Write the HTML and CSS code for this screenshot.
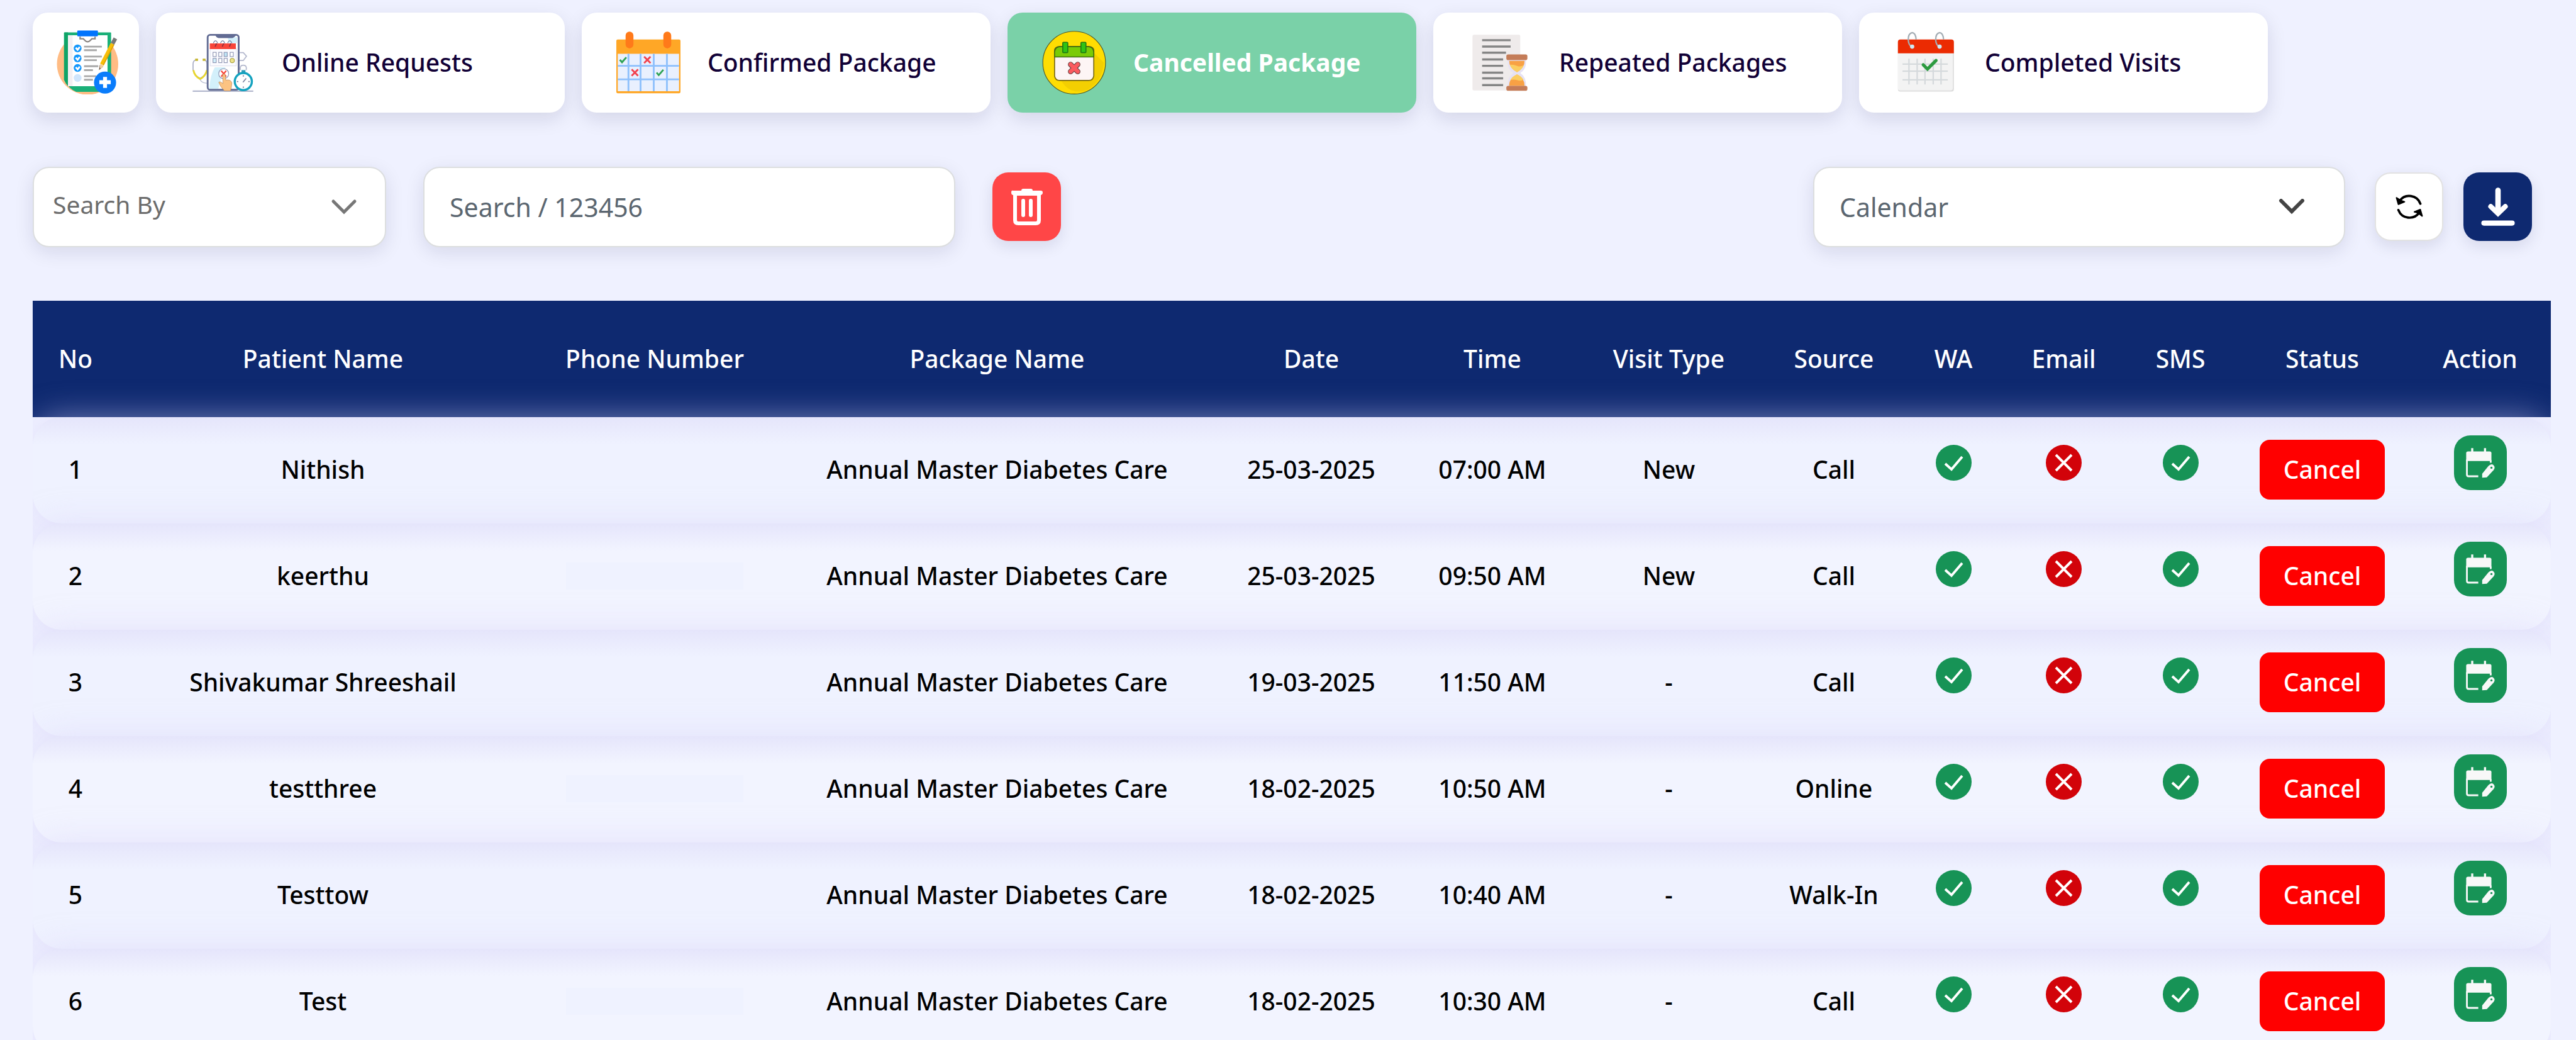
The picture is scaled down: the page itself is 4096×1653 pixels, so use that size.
FILE: index.html
```html
<!DOCTYPE html>
<html lang="en">
<head>
<meta charset="utf-8">
<title>Cancelled Package</title>
<link rel="stylesheet" href="styles.css">
</head>
<body>
<svg class="sprite" aria-hidden="true">
  <symbol id="ok" viewBox="0 0 57 57"><circle cx="28.500" cy="28.500" r="28.500" fill="#179356"/><path d="M15 30l10 9 17-20" fill="none" stroke="#fff" stroke-width="4"/></symbol>
  <symbol id="no" viewBox="0 0 57 57"><circle cx="28.500" cy="28.500" r="28.500" fill="#d2030a"/><path d="M16 16l25 25M41 16L16 41" fill="none" stroke="#fff" stroke-width="4"/></symbol>
  <symbol id="edit" viewBox="0 0 148 154">
    <path d="M34 50q0-5 5-5h61q5 0 5 5v22H34z" fill="#f8f8f8"/>
    <path d="M51 36v12M87 36v12" stroke="#f8f8f8" stroke-width="6"/>
    <path d="M36 68v42q0 5 5 5h27M103 70v7" fill="none" stroke="#f8f8f8" stroke-width="5"/>
    <path d="M79 108l18-22q8-8 14-2t0 14l-19 20-13 1z" fill="#f8f8f8"/>
    <circle cx="105" cy="91" r="3" fill="#179356"/>
  </symbol>
</svg>
<main class="page">
  <nav class="tabs" aria-label="Packages">
    <button class="tab tab-icon" type="button" aria-label="New package">
      <svg class="tab-pic" viewBox="0 0 180 180">
        <circle cx="94" cy="95" r="86" fill="#ffbc84"/>
        <path d="M28 8q0-2 2-2h128q2 0 2 2v165H62q-20-8-34-34z" fill="#1bb078"/>
        <path d="M28 8q0-2 2-2h9v151l-6-8-5-10z" fill="#0fa467"/>
        <path d="M39 14h111v143H39z" fill="#fff"/><path d="M39 14h13v143H39z" fill="#f3eff2"/>
        <path d="M73 18v6h9l5 5q7 7 14 0l5-5h9v-6" fill="none" stroke="#8a8582" stroke-width="4"/>
        <rect x="65" y="1" width="58" height="16" rx="2" fill="#0274fc"/>
        <g fill="#1597fb"><circle cx="66" cy="51" r="11"/><circle cx="66" cy="79" r="11"/><circle cx="66" cy="106" r="11"/></g>
        <circle cx="66" cy="134" r="11" fill="#cfe5fc"/>
        <path d="M61 49l5 6 6-8M61 77l5 6 6-8M61 104l5 6 6-8" fill="none" stroke="#fff" stroke-width="5"/>
        <path d="M84 46h50M84 56h36M84 74h50M84 84h36M84 101h40M84 112h25M84 129h34M84 139h25" stroke="#a9a9a9" stroke-width="5"/>
        <path d="M126 112l2-14 10 4z" fill="#6b5442"/><path d="M128 104l2-11 9 7-8 8z" fill="#f5cf9e"/>
        <path d="M134 96L164 38" stroke="#f8be08" stroke-width="11"/><path d="M138 98L168 40" stroke="#dda005" stroke-width="3"/>
        <path d="M164 38l8-15" stroke="#777" stroke-width="11"/>
        <circle cx="143" cy="147" r="31" fill="#0a7cfb"/><path d="M143 131v31M127 146h32" stroke="#fff" stroke-width="11"/>
      </svg>
    </button>
    <button class="tab" type="button">
      <svg class="tab-pic" viewBox="0 0 180 180">
        <path d="M6 171h170" stroke="#b3b8cd" stroke-width="4"/>
        <path d="M16 83q-9 2-9 12v16q2 16 20 24 16-8 19-24V95q0-10-8-12" fill="none" stroke="#a9aec6" stroke-width="3"/>
        <path d="M8 112q3 17 19 25 15-8 19-25" fill="none" stroke="#e8d62d" stroke-width="5"/>
        <path d="M13 83h8M34 83h8" stroke="#c5b52d" stroke-width="6"/><path d="M27 138q2 10 20 11" fill="none" stroke="#b3b8cd" stroke-width="2"/>
        <path d="M138 63h10l9 10-9 12h-18" fill="none" stroke="#b3b8cd" stroke-width="3"/>
        <rect x="48" y="13" width="87" height="154" rx="7" fill="#fff" stroke="#616b93" stroke-width="5"/>
        <path d="M52 164q4-40 16-60h30q-14 30-20 60zM104 20h27v16h-23z" fill="#d3f0fb"/>
        <path d="M69 13h60q-7 9-12 9H79q-7 0-10-9z" fill="#616b93"/>
        <rect x="55" y="50" width="73" height="50" fill="#fbfbff" stroke="#dfe2ee" stroke-width="2"/>
        <path d="M54 37h73v16H54z" fill="#f8453a"/>
        <path d="M64 36q6-13 12 0M84 36q6-13 12 0M104 36q6-13 12 0" fill="none" stroke="#6a7196" stroke-width="2"/>
        <path d="M73 37l-4 9M93 37l-4 9M113 37l-4 9" stroke="#8a2f3c" stroke-width="3"/>
        <g fill="#fff" stroke="#8e95b3" stroke-width="2"><rect x="63" y="62" width="9" height="12"/><rect x="79" y="62" width="9" height="12"/><rect x="94" y="62" width="9" height="12" fill="#bfe4f5"/><rect x="111" y="62" width="9" height="12"/><rect x="63" y="79" width="9" height="12" fill="#d3f0fb"/><rect x="79" y="79" width="9" height="12"/><rect x="94" y="79" width="9" height="12"/></g>
        <circle cx="117" cy="85" r="6" fill="#ece28a" stroke="#a8a03c" stroke-width="2"/>
        <circle cx="93" cy="122" r="14" fill="#fff" stroke="#8e95b3" stroke-width="2"/>
        <path d="M86 114l14 16M100 114l-14 16" stroke="#f8453a" stroke-width="4"/>
        <path d="M90 125q4-5 7 0l2 15q14-3 17 8-1 14-4 22H95q-12-12-16-24 4-4 12 4z" fill="#fcc382" stroke="#a9764b" stroke-width="1"/>
        <path d="M140 112q-3-14 8-14t8 14" fill="none" stroke="#b3b8cd" stroke-width="3"/><path d="M143 112h11v9h-11z" fill="#2f9bb8"/>
        <circle cx="148" cy="144" r="24" fill="#fff" stroke="#14a2bf" stroke-width="6"/>
        <path d="M147 146l9-11M148 126v4M148 158v4M130 144h4M162 144h4" stroke="#7c83a0" stroke-width="3"/>
      </svg>
      <span>Online Requests</span>
    </button>
    <button class="tab" type="button">
      <svg class="tab-pic" viewBox="0 0 180 180">
        <rect x="0" y="26" width="180" height="151" rx="4" fill="#ffa726"/><path d="M4 66h172v105H4z" fill="#e9f0fe"/>
        <path d="M34 66v105M68 66v105M105 66v105M142 66v105M4 100h172M4 138h172" stroke="#8ec0fc" stroke-width="5"/>
        <path d="M37 15v25M143 15v25" stroke="#ff7a1a" stroke-width="22" stroke-linecap="round"/>
        <path d="M10 83l6 7 12-14M113 119l6 7 13-15" fill="none" stroke="#2fa355" stroke-width="5"/>
        <path d="M78 74l18 18M96 74L78 92M43 110l18 18M61 110l-18 18" stroke="#f2414d" stroke-width="5"/>
      </svg>
      <span>Confirmed Package</span>
    </button>
    <button class="tab tab-active" type="button" aria-current="page">
      <svg class="tab-pic" viewBox="0 0 180 180">
        <circle cx="90" cy="91" r="88" fill="#ffdd02" stroke="#4f5a2c" stroke-width="2"/>
        <path d="M146 64l27 27q-3 52-46 76-46 18-74-26z" fill="#f3cf02"/>
        <path d="M35 58q0-12 14-12h82q14 0 14 12v70q-2 13-14 13H49q-12 0-14-13z" fill="#fdf5f5" stroke="#7a6b10" stroke-width="3"/>
        <path d="M35 75V60q2-13 14-14h82q12 1 14 14v15z" fill="#7acb06" stroke="#3f6d10" stroke-width="3"/>
        <rect x="58" y="34" width="14" height="29" rx="2" fill="#2fc313" stroke="#1f7a12" stroke-width="3"/><rect x="109" y="34" width="14" height="29" rx="2" fill="#2fc313" stroke="#1f7a12" stroke-width="3"/>
        <path d="M80 96l20 20M100 96l-20 20" stroke="#6b4545" stroke-width="15" stroke-linecap="round"/>
        <path d="M80 96l20 20M100 96l-20 20" stroke="#fb5a5f" stroke-width="11" stroke-linecap="round"/>
      </svg>
      <span>Cancelled Package</span>
    </button>
    <button class="tab" type="button">
      <svg class="tab-pic" viewBox="0 0 180 180">
        <rect x="13" y="13" width="134" height="156" rx="4" fill="#efebeb"/>
        <path d="M40 28h80M40 46h80M40 63h67M40 82h59M40 100h59M40 119h59M40 135h59M40 154h59" stroke="#858585" stroke-width="6"/>
        <path d="M112 84h51q2 26-16 36 18 12 16 38h-51q-2-26 16-38-18-10-16-36z" fill="#e6e2f4"/>
        <path d="M116 86h43q1 18-21 32-23-14-22-32zM116 156q-1-20 22-32 22 12 21 32z" fill="#f8a144"/>
        <path d="M118 97q10-1 20 3 10 4 19-2-4 12-19 20-17-9-20-21zM119 140q6-11 19-16 12 5 18 15-9 5-18 1-10-3-19 0z" fill="#fbcd61"/>
        <rect x="108" y="68" width="59" height="16" rx="5" fill="#c47c58"/><rect x="108" y="156" width="59" height="14" rx="5" fill="#c47c58"/>
      </svg>
      <span>Repeated Packages</span>
    </button>
    <button class="tab" type="button">
      <svg class="tab-pic" viewBox="0 0 180 180">
        <rect x="12" y="28" width="157" height="144" rx="6" fill="#dcdcdc"/><path d="M12 60h154v103q0 6-6 6H18q-6 0-6-6z" fill="#f3f3f3"/>
        <path d="M12 65V33q0-7 7-7h143q7 0 7 7v32z" fill="#eb2b02"/>
        <path d="M43 80v72M66 80v72M88 80v72M111 80v72M133 80v72M25 95h127M25 115h127M25 139h127" stroke="#d5d9dc" stroke-width="4"/>
        <path d="M63 26q-1-18-11-19-11 2-11 20 1 15 10 19M140 26q-1-18-11-19-11 2-11 20 1 15 10 19" fill="none" stroke="#a4adb4" stroke-width="4"/>
        <circle cx="52" cy="46" r="6" fill="#cfe9f4"/><circle cx="129" cy="46" r="6" fill="#cfe9f4"/>
        <path d="M83 97l12 12 24-24" fill="none" stroke="#2c9a3f" stroke-width="9" stroke-linecap="round"/>
      </svg>
      <span>Completed Visits</span>
    </button>
  </nav>

  <section class="toolbar" aria-label="Filters">
    <div class="pick pick-search">
      <select class="field field-small" aria-label="Search by"><option>Search By</option></select>
      <svg class="chev" viewBox="0 0 42 26" width="42" height="26"><path d="M4 4l17 17L38 4" fill="none" stroke="#777" stroke-width="5" stroke-linecap="round"/></svg>
    </div>
    <input class="field field-wide" type="text" placeholder="Search / 123456" aria-label="Search">
    <button class="square square-red" type="button" aria-label="Delete">
      <svg viewBox="0 0 50 58" width="50" height="58"><path d="M16 3q0-3 3-3h12q3 0 3 3h13q3 0 3 3t-3 4H3Q0 10 0 6t3-3z" fill="#fff"/><path d="M6 8h38v42q0 5-5 5H11q-5 0-5-5z" fill="none" stroke="#fff" stroke-width="6"/><path d="M19 19v23M31 19v23" stroke="#fff" stroke-width="6" stroke-linecap="round"/></svg>
    </button>
    <div class="right">
      <div class="pick pick-calendar">
        <select class="field field-wide" aria-label="Calendar"><option>Calendar</option></select>
        <svg class="chev" viewBox="0 0 42 26" width="42" height="26"><path d="M4 3l17 17L38 3" fill="none" stroke="#444" stroke-width="6" stroke-linecap="round"/></svg>
      </div>
      <button class="square square-white" type="button" aria-label="Refresh">
        <svg viewBox="222 230 238 224" width="44" height="42"><g fill="none" stroke="#000" stroke-width="20" stroke-linecap="round"><path d="M436 314A102 102 0 0 0 258 288M247 368A102 102 0 0 0 426 390"/></g><g stroke="#000" stroke-width="12" stroke-linejoin="round"><path d="M231 263l16 56 52-22-30-10zM451 420l-16-56-50 20 30 8z"/></g></svg>
      </button>
      <button class="square square-navy" type="button" aria-label="Download">
        <svg viewBox="948 180 288 326" width="54" height="61"><g stroke="#fff" stroke-width="46" stroke-linecap="round"><path d="M1092 204v170"/><path d="M972 482h240" stroke-width="44"/></g><path d="M1030 341l62 60 62-60" fill="none" stroke="#fff" stroke-width="42" stroke-linecap="round"/><path d="M1092 429l-70-70h140z" fill="#fff"/></svg>
      </button>
    </div>
  </section>

  <table class="grid">
    <thead>
      <tr><th>No</th><th>Patient Name</th><th>Phone Number</th><th>Package Name</th><th>Date</th><th>Time</th><th>Visit Type</th><th>Source</th><th>WA</th><th>Email</th><th>SMS</th><th>Status</th><th>Action</th></tr>
    </thead>
    <tbody>
      <tr><td>1</td><td>Nithish</td><td><span class="hidden-phone"></span></td><td>Annual Master Diabetes Care</td><td>25-03-2025</td><td>07:00 AM</td><td>New</td><td>Call</td><td class="mark"><svg><use href="#ok"/></svg></td><td class="mark"><svg><use href="#no"/></svg></td><td class="mark"><svg><use href="#ok"/></svg></td><td><button class="cancel" type="button">Cancel</button></td><td class="mark"><button class="edit" type="button" aria-label="Reschedule"><svg><use href="#edit"/></svg></button></td></tr>
      <tr><td>2</td><td>keerthu</td><td><span class="hidden-phone"></span></td><td>Annual Master Diabetes Care</td><td>25-03-2025</td><td>09:50 AM</td><td>New</td><td>Call</td><td class="mark"><svg><use href="#ok"/></svg></td><td class="mark"><svg><use href="#no"/></svg></td><td class="mark"><svg><use href="#ok"/></svg></td><td><button class="cancel" type="button">Cancel</button></td><td class="mark"><button class="edit" type="button" aria-label="Reschedule"><svg><use href="#edit"/></svg></button></td></tr>
      <tr><td>3</td><td>Shivakumar Shreeshail</td><td><span class="hidden-phone"></span></td><td>Annual Master Diabetes Care</td><td>19-03-2025</td><td>11:50 AM</td><td>-</td><td>Call</td><td class="mark"><svg><use href="#ok"/></svg></td><td class="mark"><svg><use href="#no"/></svg></td><td class="mark"><svg><use href="#ok"/></svg></td><td><button class="cancel" type="button">Cancel</button></td><td class="mark"><button class="edit" type="button" aria-label="Reschedule"><svg><use href="#edit"/></svg></button></td></tr>
      <tr><td>4</td><td>testthree</td><td><span class="hidden-phone"></span></td><td>Annual Master Diabetes Care</td><td>18-02-2025</td><td>10:50 AM</td><td>-</td><td>Online</td><td class="mark"><svg><use href="#ok"/></svg></td><td class="mark"><svg><use href="#no"/></svg></td><td class="mark"><svg><use href="#ok"/></svg></td><td><button class="cancel" type="button">Cancel</button></td><td class="mark"><button class="edit" type="button" aria-label="Reschedule"><svg><use href="#edit"/></svg></button></td></tr>
      <tr><td>5</td><td>Testtow</td><td><span class="hidden-phone"></span></td><td>Annual Master Diabetes Care</td><td>18-02-2025</td><td>10:40 AM</td><td>-</td><td>Walk-In</td><td class="mark"><svg><use href="#ok"/></svg></td><td class="mark"><svg><use href="#no"/></svg></td><td class="mark"><svg><use href="#ok"/></svg></td><td><button class="cancel" type="button">Cancel</button></td><td class="mark"><button class="edit" type="button" aria-label="Reschedule"><svg><use href="#edit"/></svg></button></td></tr>
      <tr><td>6</td><td>Test</td><td><span class="hidden-phone"></span></td><td>Annual Master Diabetes Care</td><td>18-02-2025</td><td>10:30 AM</td><td>-</td><td>Call</td><td class="mark"><svg><use href="#ok"/></svg></td><td class="mark"><svg><use href="#no"/></svg></td><td class="mark"><svg><use href="#ok"/></svg></td><td><button class="cancel" type="button">Cancel</button></td><td class="mark"><button class="edit" type="button" aria-label="Reschedule"><svg><use href="#edit"/></svg></button></td></tr>
    </tbody>
  </table>
</main>
</body>
</html>
```
FILE: styles.css
```css
* { box-sizing: border-box; }
body {
  margin: 0;
  background: #eff1ff;
  color: #000;
  font: 500 39px/56px "Noto Sans", "Open Sans", sans-serif;
}
button, select, input { font: inherit; margin: 0; }
button { border: 0; padding: 0; cursor: pointer; }
svg { display: block; }
.sprite { position: absolute; width: 0; height: 0; }

.page {
  height: 100vh;
  overflow: hidden;
  padding: 20px 40px 0 52px;
  display: flex;
  flex-direction: column;
  gap: 85px;
}

.tabs { display: flex; gap: 27px; flex: none; }
.tab {
  display: flex;
  align-items: center;
  gap: 43px;
  width: 650px;
  height: 159px;
  padding: 0 55px 2px;
  border-radius: 24px;
  background: #fff;
  color: #110036;
  white-space: nowrap;
  box-shadow: 0 10px 30px rgba(20, 20, 60, 0.12);
}
.tab-icon { width: 169px; padding: 0 34px 2px; }
.tab-pic { width: 102px; height: 102px; flex: none; }
.tab-active { background: #7ad1a8; color: #fff; font-weight: 700; }

.toolbar { display: flex; align-items: center; gap: 59px; flex: none; margin-right: 30px; height: 129px; }
.pick { display: grid; align-items: center; }
.pick > * { grid-area: 1 / 1; }
.pick-search { width: 562px; }
.pick-calendar { width: 846px; margin-right: 15px; }
.chev { justify-self: end; margin-right: 46px; pointer-events: none; }
.pick-calendar .chev { margin-right: 64px; }
.field {
  width: 100%;
  height: 128px;
  padding: 0 40px;
  border: 2px solid #dcdedf;
  border-radius: 26px;
  background: #fff;
  color: #5b6670;
  font-weight: 400;
  appearance: none;
  box-shadow: 0 8px 30px rgba(20, 20, 60, 0.11);
}
.field::placeholder { color: #5b6670; opacity: 1; }
.field-small { padding: 0 30px 8px; color: #6c6c6c; }
.field-wide { width: 846px; font-size: 41px; }
.right { display: flex; align-items: center; gap: 32px; margin-left: auto; }
.square {
  display: flex;
  align-items: center;
  justify-content: center;
  width: 109px;
  height: 109px;
  border-radius: 25px;
  box-shadow: 0 8px 24px rgba(20, 20, 60, 0.11);
}
.square-red { background: #ff4647; }
.square-white { background: #fff; border: 2px solid #e2e2e2; }
.square-navy { background: #0e2970; }

.grid { display: block; flex: none; overflow: hidden; }
.grid thead, .grid tbody { display: block; }
.grid tr {
  display: grid;
  grid-template-columns: 136fr 651fr 404fr 685fr 314fr 262fr 299fr 226fr 154fr 197fr 174fr 277fr 225fr;
  align-items: center;
  text-align: center;
  white-space: nowrap;
}
.grid thead tr { height: 185px; padding-bottom: 2px; background: #0e2970; color: #fff; }
.grid th { font-weight: 500; padding: 0; }
.grid td { padding: 0; display: flex; justify-content: center; }
.grid tbody tr {
  height: 169px;
  padding-bottom: 3px;
  border-radius: 46px;
  background: #eff2ff linear-gradient(#e5e5fb, #eff2ff00 44px);
  box-shadow: 0 0 50px rgba(215, 210, 250, 0.5);
}
.grid tbody tr:nth-child(even) { background-color: #f2f4ff; }
.grid .mark { padding-bottom: 21px; }
.mark svg { width: 57px; height: 57px; }
.hidden-phone { width: 282px; height: 43px; background: #eff2ff; }
.cancel {
  width: 199px;
  height: 95px;
  border-radius: 16px;
  background: #f00;
  color: #fff;
}
.edit { border-radius: 26px; background: #179356; }
.edit svg { width: 84px; height: 87px; }
```
